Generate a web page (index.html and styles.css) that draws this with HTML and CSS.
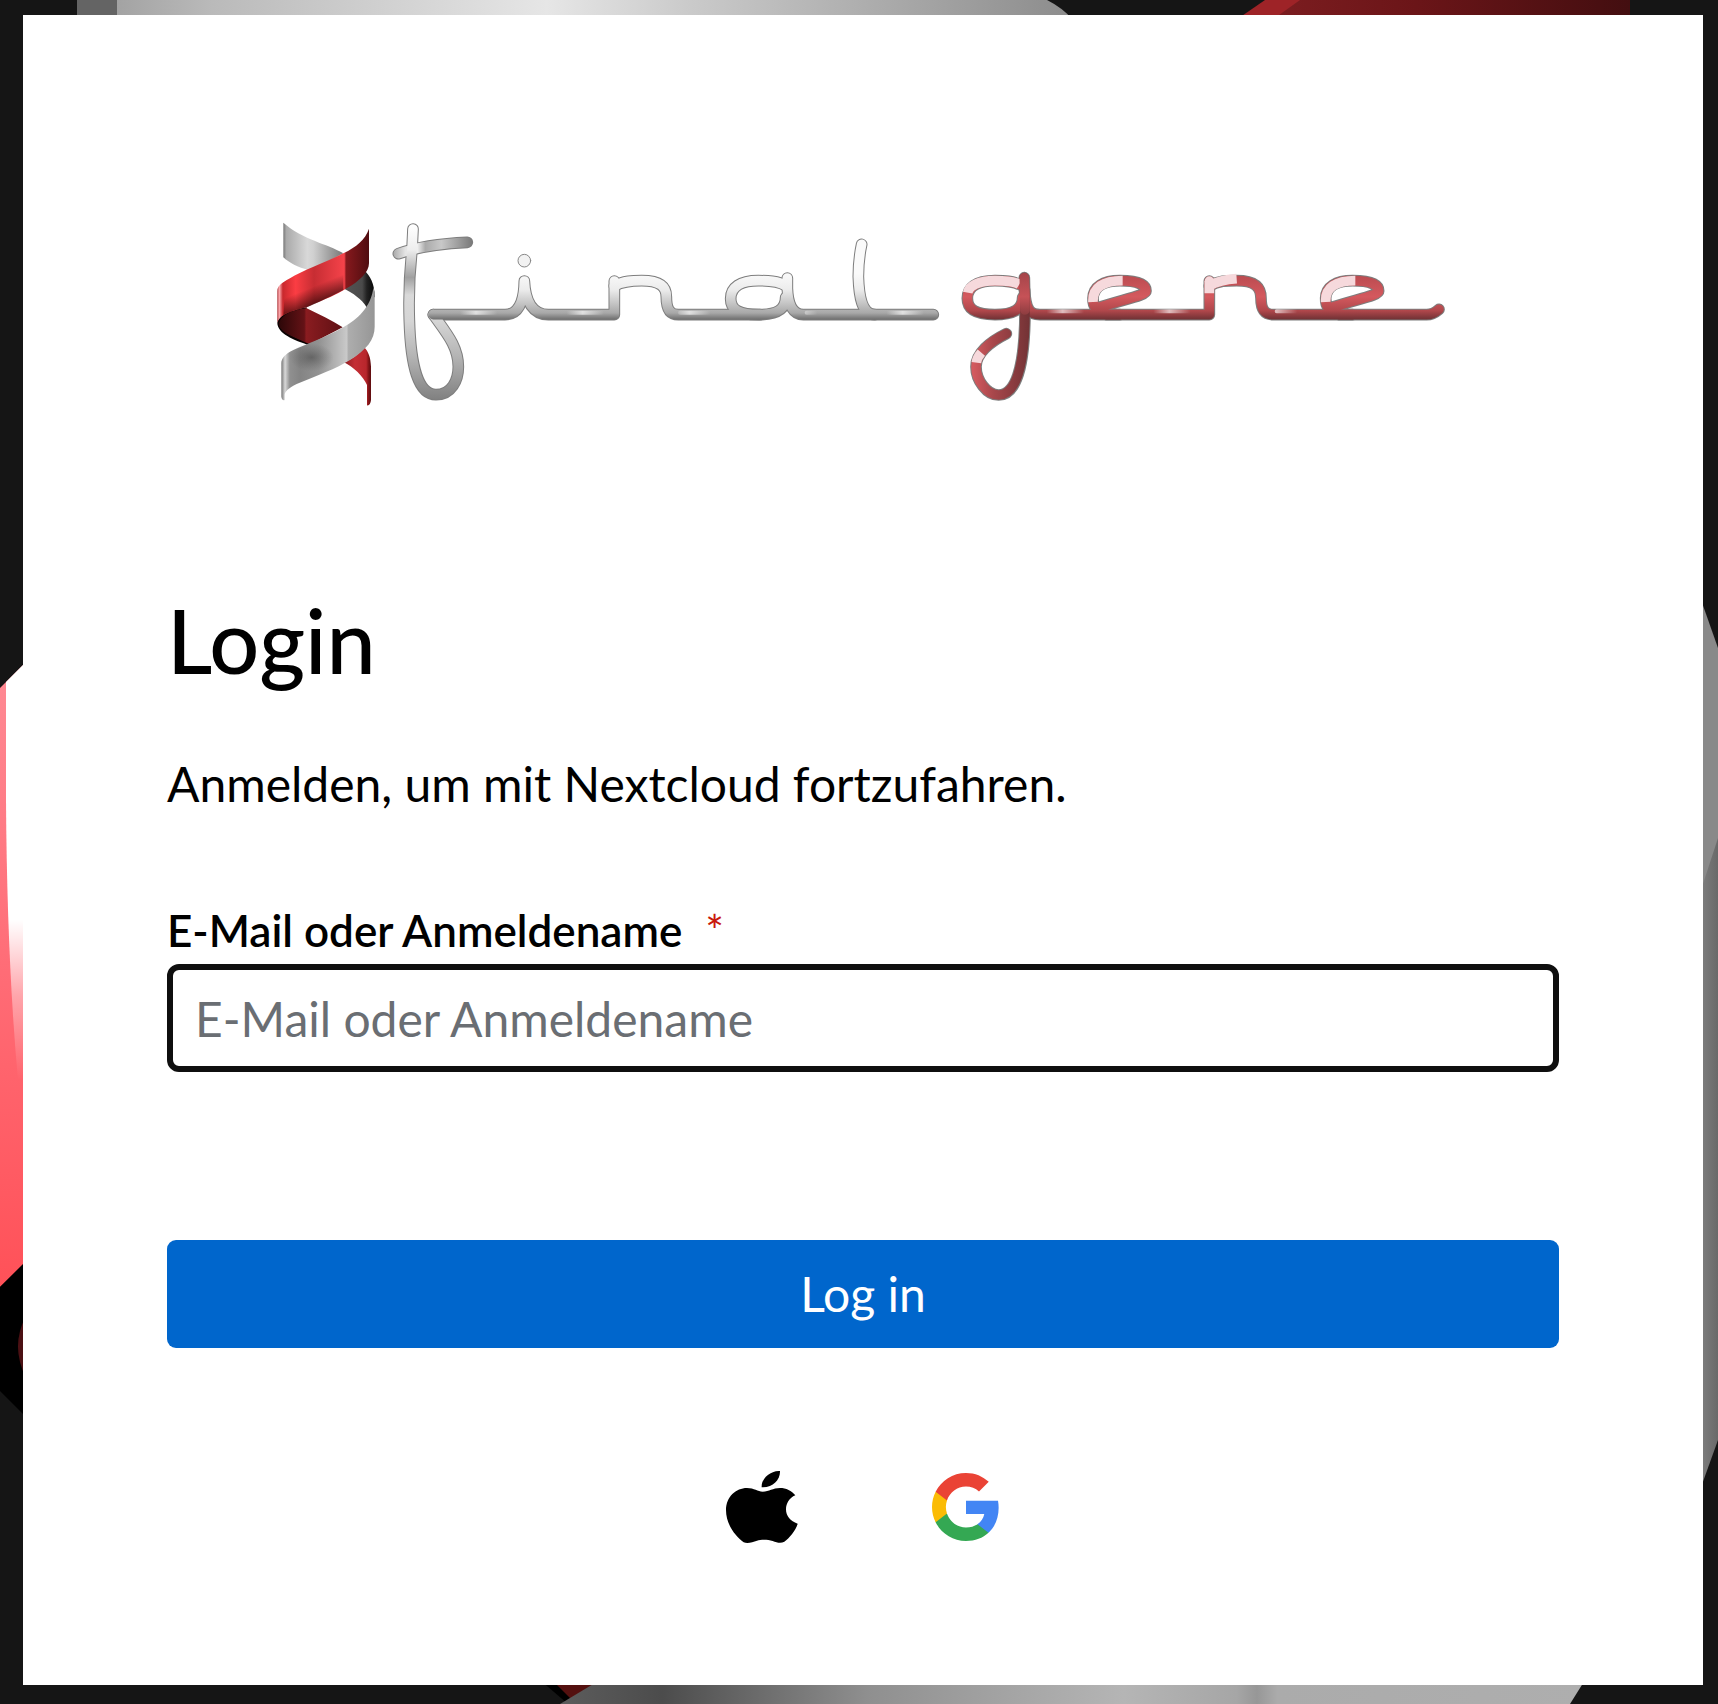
FILE: index.html
```html
<!DOCTYPE html>
<html lang="de">
<head>
  <meta charset="UTF-8">
  <meta name="viewport" content="width=device-width, initial-scale=1">
  <title>Login - final gene</title>
  <link rel="stylesheet" href="styles.css">
</head>
<body>
  <!-- oversized helix behind the card -->
  <svg class="backdrop" viewBox="0 0 1718 1704" preserveAspectRatio="none" aria-hidden="true">
    <defs>
      <linearGradient id="bgTop">
        <stop offset="0" stop-color="#a3a3a3"/><stop offset=".1" stop-color="#bababa"/>
        <stop offset=".45" stop-color="#e6e6e6"/><stop offset=".6" stop-color="#cacaca"/>
        <stop offset="1" stop-color="#8c8c8c"/>
      </linearGradient>
      <linearGradient id="bgRed">
        <stop offset="0" stop-color="#7c1d20"/><stop offset=".4" stop-color="#6b1518"/>
        <stop offset="1" stop-color="#430e10"/>
      </linearGradient>
      <linearGradient id="bgBottom">
        <stop offset="0" stop-color="#5c5c5c"/><stop offset=".1" stop-color="#4c4c4c"/>
        <stop offset=".3" stop-color="#8f8f8f"/><stop offset=".55" stop-color="#b5b5b5"/>
        <stop offset=".66" stop-color="#a6a6a6"/><stop offset=".68" stop-color="#979797"/>
        <stop offset=".7" stop-color="#ababab"/><stop offset="1" stop-color="#aeaeae"/>
      </linearGradient>
      <linearGradient id="bgPink" x2="0" y2="1">
        <stop offset="0" stop-color="#ff8b95"/><stop offset=".5" stop-color="#ff6c76"/>
        <stop offset="1" stop-color="#ff5158"/>
      </linearGradient>
      <linearGradient id="bgShine" x2="0" y2="1">
        <stop offset="0" stop-color="#fff"/><stop offset=".62" stop-color="#fff"/>
        <stop offset=".8" stop-color="#fff" stop-opacity=".4"/><stop offset="1" stop-color="#fff" stop-opacity="0"/>
      </linearGradient>
      <linearGradient id="bgSide">
        <stop offset="0" stop-color="#7f7f7f"/><stop offset="1" stop-color="#696969"/>
      </linearGradient>
    </defs>
    <path fill="#646464" d="M77 0h40v20H77z"/>
    <path fill="url(#bgTop)" d="M117 0h930q16 8 26 20H117z"/>
    <path fill="#9e2327" d="M1265 0h37l-28 20h-38z"/>
    <path fill="url(#bgRed)" d="M1300 0h330v20h-358z"/>
    <path fill="url(#bgPink)" d="M0 688l30-30v600L0 1287z"/>
    <path fill="url(#bgShine)" d="M6 682l24-24v422H18Q7 960 6 800z"/>
    <path fill="#000" d="M0 1287l30-30v164L0 1391z"/>
    <path fill="#4b1013" d="M26 1316q-16 30 0 62z"/>
    <path fill="#898989" d="M1700 597l18 51v200l-18 50z"/>
    <path fill="url(#bgSide)" d="M1700 893l18-55v602l-18 50z"/>
    <path fill="#000" d="M540 1680h40l-12 24z"/>
    <path fill="#54100f" d="M552 1680h48l-28 20z"/>
    <path fill="url(#bgBottom)" d="M600 1680h985l-15 24H560z"/>
  </svg>

  <main class="login-page">
    <div class="login-card">
      <svg class="brand" viewBox="-279 0 4176 660" role="img" aria-label="final gene">
        <defs>
          <linearGradient id="silverBack">
            <stop offset="0" stop-color="#777"/><stop offset=".05" stop-color="#aaa"/>
            <stop offset=".4" stop-color="#d8d8d8"/><stop offset=".5" stop-color="#d0d0d0"/>
            <stop offset="1" stop-color="#777"/>
          </linearGradient>
          <linearGradient id="silverDark">
            <stop offset="0" stop-color="#555"/><stop offset=".6" stop-color="#4a4a4a"/>
            <stop offset=".75" stop-color="#222"/><stop offset="1" stop-color="#050505"/>
          </linearGradient>
          <linearGradient id="silverFront">
            <stop offset="0" stop-color="#777"/><stop offset=".04" stop-color="#d8d8d8"/>
            <stop offset=".09" stop-color="#909090"/><stop offset=".2" stop-color="#848484"/>
            <stop offset=".4" stop-color="#929292"/><stop offset=".7" stop-color="#c9c9c9"/>
            <stop offset=".72" stop-color="#adadad"/><stop offset="1" stop-color="#969696"/>
          </linearGradient>
          <radialGradient id="silverShade">
            <stop offset="0" stop-color="#444" stop-opacity=".55"/><stop offset="1" stop-color="#555" stop-opacity="0"/>
          </radialGradient>
          <linearGradient id="redFront">
            <stop offset="0" stop-color="#a8252a"/><stop offset=".02" stop-color="#ffb0b4"/>
            <stop offset=".06" stop-color="#c9282d"/><stop offset=".2" stop-color="#fb3d43"/>
            <stop offset=".4" stop-color="#c72d33"/><stop offset=".73" stop-color="#f5434a"/>
            <stop offset=".75" stop-color="#86191d"/><stop offset="1" stop-color="#500d10"/>
          </linearGradient>
          <linearGradient id="redShade" gradientUnits="userSpaceOnUse" x1="110" y1="235" x2="155" y2="345">
            <stop offset=".35" stop-color="#200" stop-opacity="0"/><stop offset="1" stop-color="#100" stop-opacity=".95"/>
          </linearGradient>
          <linearGradient id="redBack">
            <stop offset="0" stop-color="#2c0708"/><stop offset=".4" stop-color="#641216"/>
            <stop offset=".43" stop-color="#8a1c20"/><stop offset="1" stop-color="#5f1014"/>
          </linearGradient>
          <linearGradient id="redTail">
            <stop offset="0" stop-color="#8d1c21"/><stop offset=".4" stop-color="#c42e35"/>
            <stop offset=".82" stop-color="#b8262c"/><stop offset=".9" stop-color="#8a1519"/><stop offset="1" stop-color="#5b0c0f"/>
          </linearGradient>
          <linearGradient id="chrome" gradientUnits="userSpaceOnUse" x1="0" y1="190" x2="0" y2="330">
            <stop offset="0" stop-color="#fafafa"/><stop offset=".35" stop-color="#ececec"/>
            <stop offset=".65" stop-color="#c4c4c4"/><stop offset=".85" stop-color="#a8a8a8"/>
            <stop offset="1" stop-color="#6a6a6a"/>
          </linearGradient>
          <linearGradient id="chromeF" gradientUnits="userSpaceOnUse" x1="0" y1="75" x2="0" y2="600">
            <stop offset="0" stop-color="#fff"/><stop offset=".14" stop-color="#eee"/>
            <stop offset=".3" stop-color="#a0a0a0"/><stop offset=".4" stop-color="#d9d9d9"/>
            <stop offset=".55" stop-color="#d5d5d5"/><stop offset=".75" stop-color="#b4b4b4"/><stop offset="1" stop-color="#808080"/>
          </linearGradient>
          <linearGradient id="chromeBar" gradientUnits="userSpaceOnUse" x1="400" y1="0" x2="640" y2="0">
            <stop offset="0" stop-color="#aaa"/><stop offset=".15" stop-color="#e4e4e4"/>
            <stop offset=".3" stop-color="#f0f0f0"/><stop offset=".4" stop-color="#aaa"/>
            <stop offset=".6" stop-color="#c8c8c8"/><stop offset="1" stop-color="#777"/>
          </linearGradient>
          <linearGradient id="ruby" gradientUnits="userSpaceOnUse" x1="0" y1="190" x2="0" y2="330">
            <stop offset="0" stop-color="#b84a4f"/><stop offset=".5" stop-color="#d4595e"/>
            <stop offset=".8" stop-color="#b0474b"/><stop offset="1" stop-color="#6c3033"/>
          </linearGradient>
          <linearGradient id="rubyTail" gradientUnits="userSpaceOnUse" x1="100" y1="0" x2="270" y2="0">
            <stop offset="0" stop-color="#d35a5f"/><stop offset=".35" stop-color="#a8474b"/><stop offset="1" stop-color="#723235"/>
          </linearGradient>
          <linearGradient id="rubyStem" gradientUnits="userSpaceOnUse" x1="0" y1="190" x2="0" y2="330">
            <stop offset="0" stop-color="#a5454a"/><stop offset=".5" stop-color="#c65257"/><stop offset="1" stop-color="#7c3639"/>
          </linearGradient>
          <linearGradient id="glint" gradientUnits="userSpaceOnUse" x1="0" y1="0" x2="320" y2="0" spreadMethod="repeat">
            <stop offset="0" stop-color="#fff" stop-opacity="0"/><stop offset=".15" stop-color="#fff" stop-opacity=".65"/>
            <stop offset=".35" stop-color="#fff" stop-opacity="0"/><stop offset="1" stop-color="#fff" stop-opacity="0"/>
          </linearGradient>

          <g id="finalLetters">
            <path d="M-80 314H135C175 314 192 275 193 213C196 275 220 314 265 314H463V213"/>
            <path d="M463 228C490 212 520 212 545 212C600 212 619 230 619 260C619 295 628 314 655 314H900"/>
            <path d="M978 228C955 212 920 212 895 212C840 212 812 232 812 266C812 300 840 314 895 314C950 314 977 300 977 262"/>
            <path d="M982 204V235C984 285 1000 314 1030 314H1420"/>
            <path d="M1205 103C1195 150 1195 170 1195 200C1197 260 1205 314 1245 314"/>
          </g>
          <g id="geneLetters">
            <path d="M248 228C220 212 190 212 165 212C105 212 82 235 82 265C82 300 110 314 165 314C225 314 248 295 248 262"/>
            <path d="M254 240C257 300 270 314 300 314H808V213"/>
            <path d="M808 228C835 212 860 212 890 212C945 212 963 230 963 265C963 300 975 314 1000 314H1460C1478 314 1488 306 1497 298"/>
            <path d="M540 314H500C470 305 458 290 459 265C460 230 490 212 540 212C595 212 618 225 618 243C618 256 560 266 475 293"/>
            <path d="M1238 314H1198C1168 305 1156 290 1157 265C1158 230 1188 212 1238 212C1293 212 1316 225 1316 243C1316 256 1258 266 1173 293"/>
          </g>
          <path id="gStem" d="M253 203L255 300C255 480 225 555 176 555C140 555 108 510 108 470C108 430 150 395 199 371"/>
          <path id="fStem" d="M459 87L456 150C447 230 446 300 448 360C452 500 475 584 528 584C575 584 595 540 595 500C595 440 560 400 520 344"/>
          <path id="fBar" d="M415 161C480 138 550 130 622 127"/>
        </defs>

        <path fill="url(#silverBack)" d="M70 68C130 120 200 130 250 160L150 212C110 200 90 190 70 172z"/>
        <path fill="url(#silverDark)" d="M312 210C330 228 344 250 344 290L320 322C305 298 280 280 250 265z"/>
        <path fill="#0a0202" d="M52 368C56 345 90 328 140 322V335C100 345 70 360 62 378C75 400 110 415 154 430L150 436C100 420 52 400 52 368z"/>
        <path fill="url(#redBack)" d="M140 325C180 345 215 360 248 382L150 433C100 410 65 400 56 375C58 350 90 330 140 325z"/>
        <path fill="url(#redTail)" d="M312 440C325 455 332 470 333 500V600Q331 618 321 616V555C310 530 280 500 252 487C280 475 300 460 312 440z"/>
        <path fill="url(#silverFront)" d="M340 262L344 280V380C344 420 320 448 270 480C230 505 170 528 110 552C85 565 74 575 74 585V600C70 602 66 600 64 590V490C64 475 75 462 100 450C140 432 190 415 250 382C290 360 334 322 340 262z"/>
        <ellipse cx="155" cy="472" rx="66" ry="42" fill="url(#silverShade)"/>
        <path fill="url(#redFront)" d="M327 86C315 120 290 140 250 160C190 190 130 210 90 235C62 250 52 258 52 275V372C54 350 80 335 140 322C200 295 230 285 260 265C300 243 327 215 327 190z"/>
        <path fill="url(#redShade)" d="M76 243L250 160V270C200 295 170 310 140 322C105 330 85 336 70 346z"/>

        <g class="brand-edge"><use href="#fStem"/><use href="#fBar"/></g>
        <g class="brand-edge" transform="translate(600 30)"><use href="#finalLetters"/></g>
        <g class="brand-fill">
          <use href="#fBar" stroke="url(#chromeBar)"/>
          <use href="#fStem" stroke="url(#chromeF)"/>
        </g>
        <g class="brand-fill" transform="translate(600 30)">
          <use href="#finalLetters" stroke="url(#chrome)"/>
          <path class="brand-glint" d="M-60 308H130M270 308H440M660 308H780M1040 308H1410" stroke="url(#glint)"/>
          <circle class="brand-dot" cx="193" cy="152" r="19"/>
        </g>

        <g transform="translate(2040 30)">
          <g class="brand-edge"><use href="#geneLetters"/><use href="#gStem"/></g>
          <g class="brand-fill">
            <use href="#geneLetters" stroke="url(#ruby)"/>
            <use href="#gStem" stroke="url(#rubyTail)"/>
            <path class="brand-blush" d="M238 223C220 212 190 212 165 212C115 212 87 227 83 248M459 276C457 232 490 212 548 212M1157 276C1155 232 1188 212 1246 212M808 213V250M808 228C830 214 860 208 890 206M109 458Q111 443 124 428"/>
            <circle class="brand-cap" cx="808" cy="213" r="14"/>
            <path d="M253 203L255 300" stroke="url(#rubyStem)"/>
            <path class="brand-glint" d="M310 304H440M620 304H780M1010 304H1140" stroke="url(#glint)"/>
          </g>
        </g>
      </svg>

      <h1 class="login-title">Login</h1>
      <p class="login-hint">Anmelden, um mit Nextcloud fortzufahren.</p>

      <form class="login-form" onsubmit="return false">
        <label class="field-label" for="username">E-Mail oder Anmeldename <span class="required">*</span></label>
        <input class="field-input" id="username" name="username" type="text" placeholder="E-Mail oder Anmeldename" autocomplete="username">
        <button class="login-button" type="submit">Log in</button>
      </form>

      <div class="social-links">
        <a href="#apple" aria-label="Apple">
          <svg class="social-icon apple" viewBox="75 63 216 216">
            <path d="M185 125C205 125 215 114 237 114C255 114 272 122 283 136C265 144 255 160 255 178C255 198 268 214 290 221C285 240 265 265 250 275C240 281 228 278 215 273C200 268 180 268 168 272C155 277 140 281 128 277C105 260 75 225 75 180C75 140 105 114 138 114C160 114 170 125 185 125z"/>
            <path d="M237 63C238 90 215 114 182 112C180 88 205 62 237 63z"/>
          </svg>
        </a>
        <a href="#google" aria-label="Google">
          <svg class="social-icon google" viewBox="1 1 22 22">
            <path fill="#4285f4" d="M22.56 12.25c0-.78-.07-1.53-.2-2.25H12v4.26h5.92c-.26 1.37-1.04 2.53-2.21 3.31v2.77h3.57c2.08-1.92 3.28-4.74 3.28-8.09z"/>
            <path fill="#34a853" d="M12 23c2.97 0 5.46-.98 7.28-2.66l-3.57-2.77c-.98.66-2.23 1.06-3.71 1.06-2.86 0-5.29-1.93-6.16-4.53H2.18v2.84C3.99 20.53 7.7 23 12 23z"/>
            <path fill="#fbbc05" d="M5.84 14.09c-.22-.66-.35-1.36-.35-2.09s.13-1.43.35-2.09V7.07H2.18C1.43 8.55 1 10.22 1 12s.43 3.45 1.18 4.93l3.66-2.84z"/>
            <path fill="#ea4335" d="M12 5.38c1.62 0 3.06.56 4.21 1.64l3.15-3.15C17.45 2.09 14.97 1 12 1 7.7 1 3.99 3.47 2.18 7.07l3.66 2.84c.87-2.6 3.3-4.53 6.16-4.53z"/>
          </svg>
        </a>
      </div>
    </div>
  </main>
</body>
</html>
```
FILE: styles.css
```css
* { box-sizing: border-box; }

body {
  margin: 0;
  background: #151515;
  color: #000;
  font-family: Lato, "Liberation Sans", sans-serif;
  font-size: 48px;
  line-height: 72px;
}

.backdrop { position: fixed; top: 0; left: 0; width: 100%; height: 100%; z-index: -1; }

.login-page { display: flex; min-height: 100vh; padding: 15px 15px 19px 23px; }
.login-card { flex: 1; background: #fff; padding: 185px 144px 140px; }

/* logo */
.brand       { display: block; width: 100%; height: auto; margin-bottom: 168px; }
.brand-edge  { fill: none; stroke: #7d7d7d; stroke-width: 35px; stroke-linecap: round; stroke-linejoin: round; }
.brand-fill  { fill: none; stroke-width: 29px; stroke-linecap: round; stroke-linejoin: round; }
.brand-glint { stroke-width: 12px; }
.brand-dot   { fill: #f2f2f2; stroke: #888; stroke-width: 3px; }
.brand-blush { stroke: #f6d9dc; stroke-linecap: butt; }
.brand-cap   { fill: #f6d9dc; }

/* text */
.login-title { margin: 0 0 56px; font-size: 88px; line-height: 104px; font-weight: 500; }
.login-hint  { margin: 0 0 80px; }

/* form */
.login-form  { display: flex; flex-direction: column; }
.field-label { margin-bottom: 4px; font-size: 44px; line-height: 60px; font-weight: 600; }
.required    { margin-left: 12px; color: #c9190b; font-weight: 400; }
.field-input {
  width: 100%; height: 108px; margin-bottom: 168px; padding: 0 22px;
  border: 6px solid #0f0f0f; border-radius: 12px; background: #fff;
  font: inherit; color: #151515; outline: none;
}
.field-input::placeholder { color: #6a6e73; opacity: 1; }
.login-button {
  height: 108px; padding: 0 48px; border: none; border-radius: 9px;
  background: #06c; color: #fff; font: inherit; cursor: pointer;
}
.login-button:hover { background: #004080; }

.social-links { display: flex; justify-content: center; gap: 134px; margin-top: 123px; }
.social-links a { display: flex; align-items: center; color: #000; }
.social-icon { display: block; fill: currentColor; }
.apple  { width: 72px; height: 72px; }
.google { width: 68px; height: 68px; }
```
